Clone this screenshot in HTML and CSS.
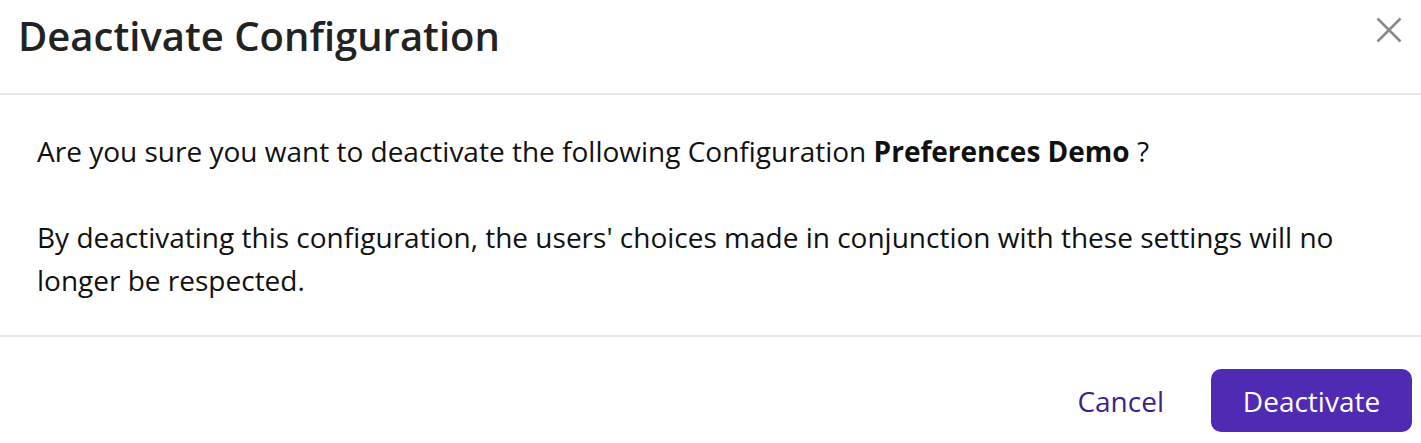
FILE: index.html
```html
<!DOCTYPE html>
<html lang="en">
<head>
<meta charset="utf-8">
<title>Deactivate Configuration</title>
<link rel="stylesheet" href="styles.css">
</head>
<body>
<div class="modal">
  <div class="modal-header">
    <h1 class="modal-title">Deactivate Configuration</h1>
    <button class="close" aria-label="Close">
      <svg width="26" height="26" viewBox="0 0 26 26"><path d="M1.5 1.5 L24.5 24.5 M24.5 1.5 L1.5 24.5" stroke="#8a8a8a" stroke-width="2.6" fill="none"/></svg>
    </button>
  </div>
  <div class="modal-body">
    <p>Are you sure you want to deactivate the following Configuration <strong>Preferences Demo</strong> ?</p>
    <p>By deactivating this configuration, the users' choices made in conjunction with these settings will no longer be respected.</p>
  </div>
  <div class="modal-footer">
    <button class="btn-link">Cancel</button>
    <button class="btn-primary">Deactivate</button>
  </div>
</div>
</body>
</html>
```

FILE: styles.css
```css
html, body {
  margin: 0;
  padding: 0;
  background: #fff;
}
body {
  font-family: "Open Sans", "Liberation Sans", sans-serif;
  color: #111;
}
.modal {
  width: 1421px;
}
.modal-header {
  display: flex;
  justify-content: space-between;
  align-items: flex-start;
  height: 95px;
  box-sizing: border-box;
  padding: 12px 19px 0 18px;
  border-bottom: 2px solid #e9e9e9;
}
.modal-title {
  margin: 0;
  font-size: 40px;
  font-weight: 600;
  line-height: 48px;
  color: #222;
}
.close {
  background: none;
  border: 0;
  padding: 0;
  margin-top: 5px;
  width: 26px;
  height: 26px;
  cursor: pointer;
}
.close svg { display: block; }
.modal-body {
  padding: 35px 37px 33px 37px;
  font-size: 28px;
  line-height: 43px;
  border-bottom: 2px solid #e9e9e9;
}
.modal-body p {
  margin: 0;
}
.modal-body p + p {
  margin-top: 43px;
}
.modal-body strong {
  font-weight: 700;
}
.modal-footer {
  display: flex;
  justify-content: flex-end;
  align-items: flex-start;
  gap: 12px;
  padding: 32px 9px 0 0;
}
.btn-link {
  background: none;
  border: 0;
  font-family: inherit;
  font-size: 28px;
  color: #3d1f8c;
  padding: 0 35px;
  height: 63px;
  cursor: pointer;
}
.btn-primary {
  font-family: inherit;
  font-size: 28px;
  color: #fff;
  background: #4f2ab3;
  border: 0;
  border-radius: 10px;
  height: 63px;
  width: 201px;
  padding: 0;
  cursor: pointer;
}
```
